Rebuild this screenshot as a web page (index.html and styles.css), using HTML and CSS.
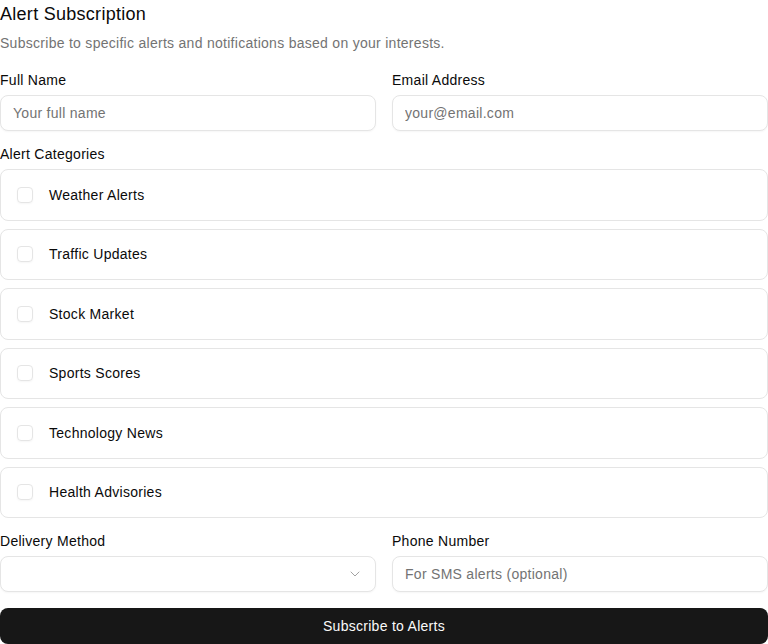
FILE: index.html
```html
<!DOCTYPE html>
<html>
<head>
<meta charset="utf-8">
<link rel="stylesheet" href="styles.css">
</head>
<body>
<form class="form">
  <h1 class="title">Alert Subscription</h1>
  <p class="subtitle">Subscribe to specific alerts and notifications based on your interests.</p>
  <div class="row">
    <div class="field">
      <label class="label">Full Name</label>
      <input class="input" type="text" placeholder="Your full name">
    </div>
    <div class="field">
      <label class="label">Email Address</label>
      <input class="input" type="email" placeholder="your@email.com">
    </div>
  </div>
  <div class="section">
    <div class="label cat-label">Alert Categories</div>
    <div class="list">
      <label class="item"><span class="box"></span><span>Weather Alerts</span></label>
      <label class="item"><span class="box"></span><span>Traffic Updates</span></label>
      <label class="item"><span class="box"></span><span>Stock Market</span></label>
      <label class="item"><span class="box"></span><span>Sports Scores</span></label>
      <label class="item"><span class="box"></span><span>Technology News</span></label>
      <label class="item"><span class="box"></span><span>Health Advisories</span></label>
    </div>
  </div>
  <div class="row">
    <div class="field">
      <label class="label">Delivery Method</label>
      <div class="input select">
        <svg class="chev" width="16" height="16" viewBox="0 0 24 24" fill="none" stroke="currentColor" stroke-width="1.5" stroke-linecap="round" stroke-linejoin="round"><path d="m6 9 6 6 6-6"/></svg>
      </div>
    </div>
    <div class="field">
      <label class="label">Phone Number</label>
      <input class="input" type="tel" placeholder="For SMS alerts (optional)">
    </div>
  </div>
  <button class="btn" type="button">Subscribe to Alerts</button>
</form>
</body>
</html>
```
FILE: styles.css
```css
* { box-sizing: border-box; }
html, body { margin: 0; padding: 0; background: #fff; }
body {
  font-family: "Liberation Sans", Arial, sans-serif;
  color: #0a0a0a;
  font-size: 14px;
  letter-spacing: 0.02em;
}
.form { display: flex; flex-direction: column; }
.title {
  margin: 0;
  font-size: 18px;
  font-weight: 400;
  line-height: 28px;
}
.subtitle {
  margin: 5px 0 0;
  color: #737373;
  font-size: 14px;
  line-height: 20px;
}
.row {
  display: grid;
  grid-template-columns: 1fr 1fr;
  gap: 16px;
  margin-top: 17px;
}
.row + .section { margin-top: 13px; }
.section + .row { margin-top: 13px; }
.field { display: flex; flex-direction: column; gap: 5px; }
.label { font-size: 14px; line-height: 20px; color: #0a0a0a; }
.input {
  height: 36px;
  width: 100%;
  border: 1px solid #e5e5e5;
  border-radius: 8px;
  padding: 0 12px;
  font: inherit;
  font-size: 14px;
  letter-spacing: 0.02em;
  color: #0a0a0a;
  background: #fff;
  box-shadow: 0 1px 2px rgba(0,0,0,0.04);
  outline: none;
}
.input::placeholder { color: #737373; }
.select {
  display: flex;
  align-items: center;
  justify-content: flex-end;
  padding-right: 12px;
}
.chev { color: #a3a3a3; }
.cat-label { margin-bottom: 5px; }
.list { display: flex; flex-direction: column; gap: 8px; }
.item {
  display: flex;
  align-items: center;
  gap: 16px;
  padding: 0 16px;
  height: 51.5px;
  border: 1px solid #e5e5e5;
  border-radius: 8px;
  font-size: 14px;
  line-height: 20px;
}
.box {
  width: 16px;
  height: 16px;
  border: 1px solid #e5e5e5;
  border-radius: 4px;
  box-shadow: 0 1px 2px rgba(0,0,0,0.04);
  flex: none;
}
.btn {
  margin-top: 16px;
  height: 36px;
  border: none;
  border-radius: 8px;
  background: #171717;
  color: #fafafa;
  font: inherit;
  font-size: 14px;
  letter-spacing: 0.02em;
  width: 100%;
}
```
